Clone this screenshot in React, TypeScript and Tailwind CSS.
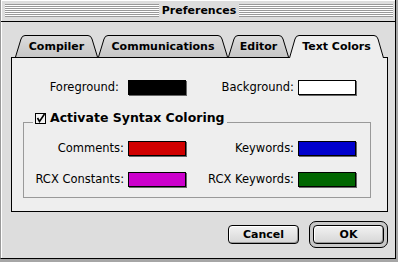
import React from "react";

const font = "font-['DejaVu_Sans',sans-serif]";

const tabs = [
  { label: "Compiler", width: 83 },
  { label: "Communications", width: 130 },
  { label: "Editor", width: 61 },
  { label: "Text Colors", width: 95, active: true },
];

function Tab({ label, width, active }: { label: string; width: number; active?: boolean }) {
  const h = active ? 23 : 22;
  const d = `M0.5,${h} L6,4 Q7,0.5 10,0.5 H${width - 10} Q${width - 7},0.5 ${width - 6},4 L${width - 0.5},${h}`;
  return (
    <div className="relative flex h-[23px] items-start justify-center pt-[5px]" style={{ width }}>
      <svg className="absolute inset-0" width={width} height={23} viewBox={`0 0 ${width} 23`}>
        <defs>
          <linearGradient id="tabgrad" x1="0" y1="0" x2="0" y2="1">
            <stop offset="0" stopColor="#dcdcdc" />
            <stop offset="1" stopColor="#c6c6c6" />
          </linearGradient>
        </defs>
        <path d={d} fill={active ? "#eeeeee" : "url(#tabgrad)"} stroke="#000" strokeWidth="1" />
      </svg>
      <span className="relative text-[11px] font-bold leading-[14px] text-black">{label}</span>
    </div>
  );
}

function Swatch({ className }: { className: string }) {
  return <span className={`block h-[15px] w-[58px] border border-black shadow-[1px_1px_0_#666] ${className}`} />;
}

function Field({ label, swatch, labelWidth, extra = "" }: { label: string; swatch: string; labelWidth: string; extra?: string }) {
  return (
    <div className="flex items-center gap-[4px]">
      <span className={`${labelWidth} ${extra} text-right text-[11.5px] leading-[15px] text-black`}>{label}</span>
      <Swatch className={swatch} />
    </div>
  );
}

function Button({ children }: { children: React.ReactNode }) {
  return (
    <div className="flex h-[19px] w-[71px] items-center justify-center rounded-[4px] border border-black bg-[linear-gradient(#f2f2f2,#d6d6d6)] text-[11px] font-bold leading-none shadow-[inset_1px_1px_0_#fff,inset_-1px_-1px_0_#999]">
      {children}
    </div>
  );
}

export default function App() {
  return (
    <div className={`h-[262px] w-[398px] bg-[#a6a6a6] ${font}`}>
      <div className="flex h-[259px] w-[396px] flex-col border-b border-l border-r border-b-black border-l-[#999] border-r-black bg-[#dddddd] shadow-[inset_1px_1px_0_#fff]">
        <div className="flex h-[22px] items-center gap-[3px] border-b border-black pl-[4px] pr-[2px]">
          <div className="h-[13px] flex-1 bg-[repeating-linear-gradient(to_bottom,#999_0px,#999_1px,#fff_1px,#fff_2px)]" />
          <span className="text-[11px] font-bold leading-none">Preferences</span>
          <div className="h-[13px] flex-1 bg-[repeating-linear-gradient(to_bottom,#999_0px,#999_1px,#fff_1px,#fff_2px)]" />
        </div>

        <div className="flex flex-col pl-[10px] pt-[13px]">
          <div className="relative z-10 -mb-px ml-[4px] flex">
            {tabs.map((t) => (
              <Tab key={t.label} {...t} />
            ))}
          </div>

          <div className="flex h-[155px] w-[377px] flex-col border border-black bg-[#eeeeee] pt-[22px]">
            <div className="flex">
              <Field label="Foreground:" swatch="bg-black" labelWidth="w-[112px]" extra="pr-[5px]" />
              <Field label="Background:" swatch="bg-white" labelWidth="w-[108px]" />
            </div>

            <fieldset className="ml-[11px] mt-[16px] w-[348px] border border-[#999] pb-[10px]">
              <legend className="ml-[9px] flex items-center gap-[4px] px-[2px] pb-[8px]">
                <svg width="11" height="11" viewBox="0 0 11 11">
                  <rect x="0.5" y="0.5" width="10" height="10" fill="#f4f4f4" stroke="#000" />
                  <path d="M2.5,5 L4.5,8.5 L9.5,1" fill="none" stroke="#000" strokeWidth="1.6" />
                </svg>
                <span className="text-[12.5px] font-bold leading-[14px]">Activate Syntax Coloring</span>
              </legend>
              <div className="mt-[8px] flex flex-col gap-[16px]">
                <div className="flex">
                  <Field label="Comments:" swatch="bg-[#d00000]" labelWidth="w-[100px]" />
                  <Field label="Keywords:" swatch="bg-[#0000cc]" labelWidth="w-[108px]" />
                </div>
                <div className="flex">
                  <Field label="RCX Constants:" swatch="bg-[#cc00cc]" labelWidth="w-[100px]" />
                  <Field label="RCX Keywords:" swatch="bg-[#006600]" labelWidth="w-[108px]" />
                </div>
              </div>
            </fieldset>
          </div>

          <div className="mt-[9px] flex w-[377px] items-center justify-end gap-[10px]">
            <Button>Cancel</Button>
            <div className="rounded-[7px] border border-black bg-[#c8c8c8] p-[3px]">
              <Button>OK</Button>
            </div>
          </div>
        </div>
      </div>
    </div>
  );
}
